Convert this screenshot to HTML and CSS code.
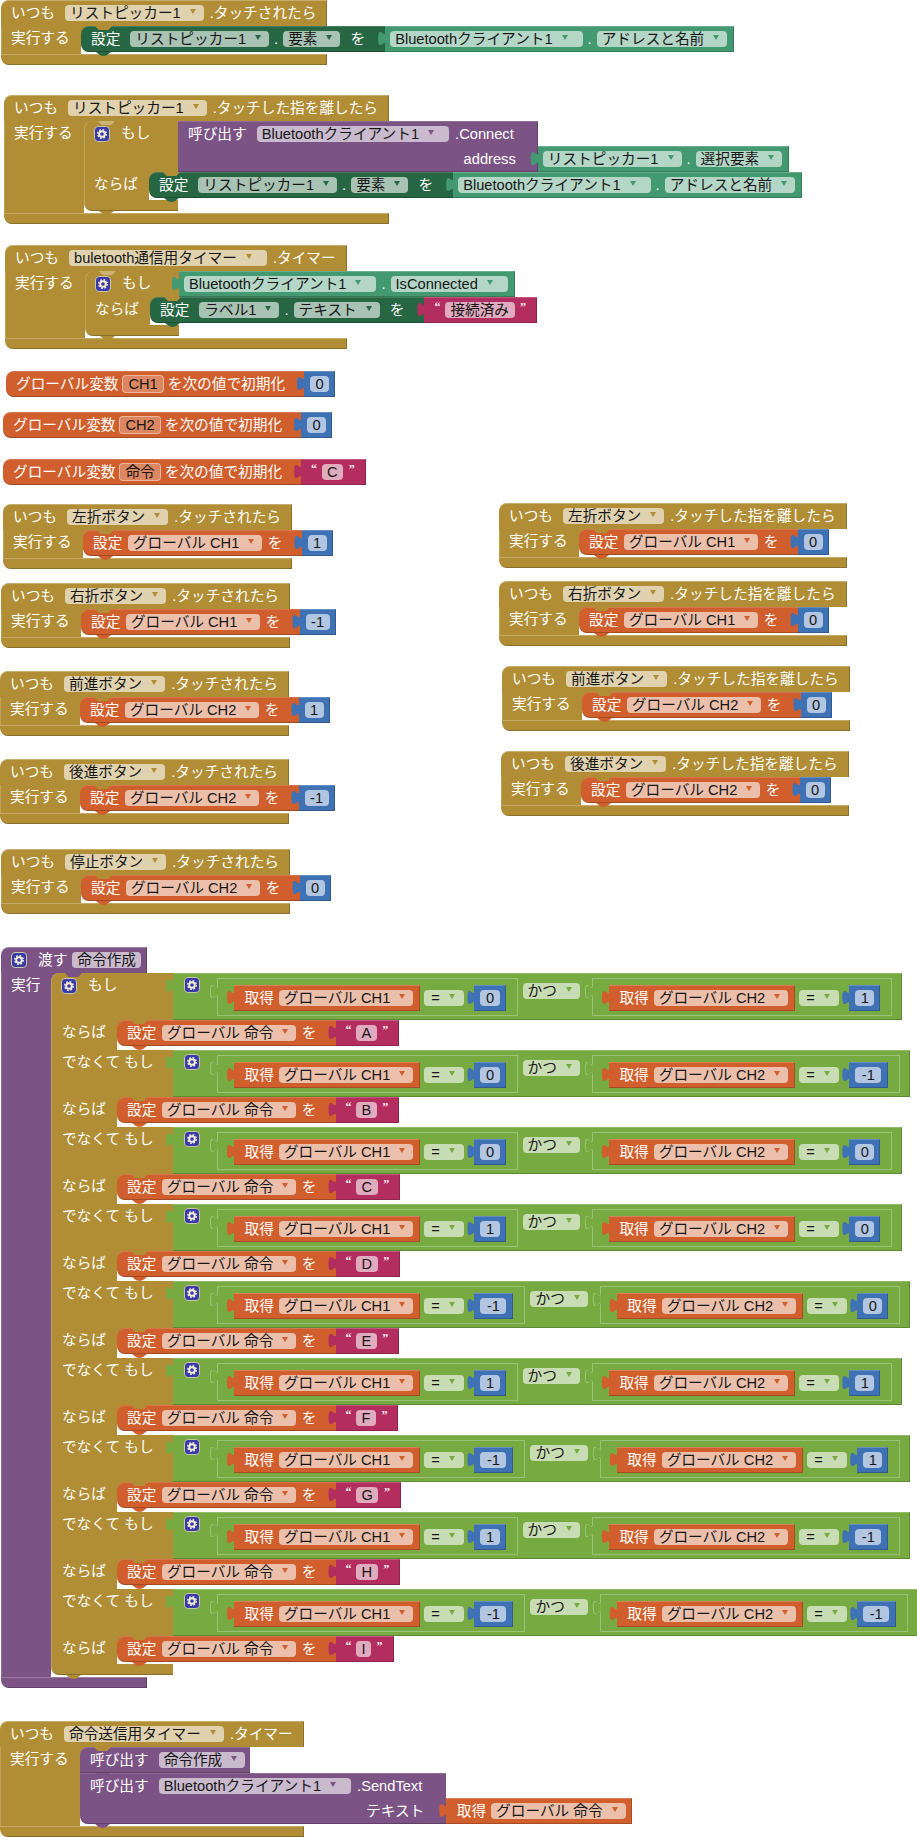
FILE: index.html
```html
<!DOCTYPE html>
<html lang="ja">
<head>
    <meta charset="UTF-8">
    <title>ブロック</title>
    <link rel="stylesheet" href="styles.css">
</head>
<body>
<svg class="defs" width="0" height="0">
    <symbol id="gear" viewBox="0 0 16 16">
        <circle cx="8" cy="8" r="3.2" fill="none" stroke="#f4f0d8" stroke-width="2.2"/>
        <circle cx="8" cy="8" r="4.9" fill="none" stroke="#f4f0d8" stroke-width="1.6" stroke-dasharray="2.1 1.75"/>
    </symbol>
</svg>

<div class="canvas">

    <div class="ev gold at-1">
        <div class="head"><span>いつも</span><span class="dd">リストピッカー1<i class="arw"></i></span><span>.タッチされたら</span></div>
        <div class="body">
            <div class="side">実行する</div>
            <div class="main">
                <div class="row">
                    <div class="stmt setter dkgreen">設定<span class="dd">リストピッカー1<i class="arw"></i></span><span class="dot">.</span><span class="dd">要素<i class="arw"></i></span>を</div>
                    <div class="val getter green"><span class="dd wide">Bluetoothクライアント1<i class="arw"></i></span><span class="dot">.</span><span class="dd">アドレスと名前<i class="arw"></i></span></div>
                </div>
            </div>
        </div>
        <div class="foot"></div>
    </div>

    <div class="ev gold at-2">
        <div class="head"><span>いつも</span><span class="dd">リストピッカー1<i class="arw"></i></span><span>.タッチした指を離したら</span></div>
        <div class="body">
            <div class="side">実行する</div>
            <div class="main">
                <div class="stmt if if-ev gold">
                    <div class="cond">
                        <div class="cell"><span class="gear"><svg><use href="#gear"/></svg></span>もし</div>
                        <div class="call purple">
                            <div class="call-body">
                                <div class="call-line">呼び出す<span class="dd wide">Bluetoothクライアント1<i class="arw"></i></span><span class="meth">.Connect</span></div>
                                <div class="call-line call-arg">address</div>
                            </div>
                            <div class="val getter green"><span class="dd">リストピッカー1<i class="arw"></i></span><span class="dot">.</span><span class="dd">選択要素<i class="arw"></i></span></div>
                        </div>
                    </div>
                    <div class="then">
                        <div class="cell then-cell">ならば</div>
                        <div class="row">
                            <div class="stmt setter dkgreen">設定<span class="dd">リストピッカー1<i class="arw"></i></span><span class="dot">.</span><span class="dd">要素<i class="arw"></i></span>を</div>
                            <div class="val getter green"><span class="dd wide">Bluetoothクライアント1<i class="arw"></i></span><span class="dot">.</span><span class="dd">アドレスと名前<i class="arw"></i></span></div>
                        </div>
                    </div>
                    <div class="if-foot"></div>
                </div>
            </div>
        </div>
        <div class="foot"></div>
    </div>

    <div class="ev gold at-3">
        <div class="head"><span>いつも</span><span class="dd wide">buletooth通信用タイマー<i class="arw"></i></span><span>.タイマー</span></div>
        <div class="body">
            <div class="side">実行する</div>
            <div class="main">
                <div class="stmt if if-ev gold">
                    <div class="cond">
                        <div class="cell"><span class="gear"><svg><use href="#gear"/></svg></span>もし</div>
                        <div class="val getter green"><span class="dd wide">Bluetoothクライアント1<i class="arw"></i></span><span class="dot">.</span><span class="dd wide">IsConnected<i class="arw"></i></span></div>
                    </div>
                    <div class="then">
                        <div class="cell then-cell">ならば</div>
                        <div class="row">
                            <div class="stmt setter dkgreen">設定<span class="dd">ラベル1<i class="arw"></i></span><span class="dot">.</span><span class="dd">テキスト<i class="arw"></i></span>を</div>
                            <div class="val str pink"><span class="q">“</span><span class="fld">接続済み</span><span class="q">”</span></div>
                        </div>
                    </div>
                    <div class="if-foot"></div>
                </div>
            </div>
        </div>
        <div class="foot"></div>
    </div>

    <div class="glob at-g1"><div class="gvar orange">グローバル変数<span class="vname">CH1</span>を次の値で初期化</div><div class="val num blue"><span class="fld">0</span></div></div>
    <div class="glob at-g2"><div class="gvar orange">グローバル変数<span class="vname">CH2</span>を次の値で初期化</div><div class="val num blue"><span class="fld">0</span></div></div>
    <div class="glob at-g3"><div class="gvar orange">グローバル変数<span class="vname">命令</span>を次の値で初期化</div><div class="val str pink"><span class="q">“</span><span class="fld">C</span><span class="q">”</span></div></div>

    <div class="ev gold at-l1">
        <div class="head"><span>いつも</span><span class="dd">左折ボタン<i class="arw"></i></span><span>.タッチされたら</span></div>
        <div class="body"><div class="side">実行する</div><div class="main"><div class="row"><div class="stmt orange">設定<span class="dd">グローバル CH1<i class="arw"></i></span>を</div><div class="val num blue"><span class="fld">1</span></div></div></div></div>
        <div class="foot"></div>
    </div>
    <div class="ev gold at-l2">
        <div class="head"><span>いつも</span><span class="dd">右折ボタン<i class="arw"></i></span><span>.タッチされたら</span></div>
        <div class="body"><div class="side">実行する</div><div class="main"><div class="row"><div class="stmt orange">設定<span class="dd">グローバル CH1<i class="arw"></i></span>を</div><div class="val num blue"><span class="fld">-1</span></div></div></div></div>
        <div class="foot"></div>
    </div>
    <div class="ev gold at-l3">
        <div class="head"><span>いつも</span><span class="dd">前進ボタン<i class="arw"></i></span><span>.タッチされたら</span></div>
        <div class="body"><div class="side">実行する</div><div class="main"><div class="row"><div class="stmt orange">設定<span class="dd">グローバル CH2<i class="arw"></i></span>を</div><div class="val num blue"><span class="fld">1</span></div></div></div></div>
        <div class="foot"></div>
    </div>
    <div class="ev gold at-l4">
        <div class="head"><span>いつも</span><span class="dd">後進ボタン<i class="arw"></i></span><span>.タッチされたら</span></div>
        <div class="body"><div class="side">実行する</div><div class="main"><div class="row"><div class="stmt orange">設定<span class="dd">グローバル CH2<i class="arw"></i></span>を</div><div class="val num blue"><span class="fld">-1</span></div></div></div></div>
        <div class="foot"></div>
    </div>
    <div class="ev gold at-l5">
        <div class="head"><span>いつも</span><span class="dd">停止ボタン<i class="arw"></i></span><span>.タッチされたら</span></div>
        <div class="body"><div class="side">実行する</div><div class="main"><div class="row"><div class="stmt orange">設定<span class="dd">グローバル CH2<i class="arw"></i></span>を</div><div class="val num blue"><span class="fld">0</span></div></div></div></div>
        <div class="foot"></div>
    </div>

    <div class="ev gold at-r1">
        <div class="head"><span>いつも</span><span class="dd">左折ボタン<i class="arw"></i></span><span>.タッチした指を離したら</span></div>
        <div class="body"><div class="side">実行する</div><div class="main"><div class="row"><div class="stmt orange">設定<span class="dd">グローバル CH1<i class="arw"></i></span>を</div><div class="val num blue"><span class="fld">0</span></div></div></div></div>
        <div class="foot"></div>
    </div>
    <div class="ev gold at-r2">
        <div class="head"><span>いつも</span><span class="dd">右折ボタン<i class="arw"></i></span><span>.タッチした指を離したら</span></div>
        <div class="body"><div class="side">実行する</div><div class="main"><div class="row"><div class="stmt orange">設定<span class="dd">グローバル CH1<i class="arw"></i></span>を</div><div class="val num blue"><span class="fld">0</span></div></div></div></div>
        <div class="foot"></div>
    </div>
    <div class="ev gold at-r3">
        <div class="head"><span>いつも</span><span class="dd">前進ボタン<i class="arw"></i></span><span>.タッチした指を離したら</span></div>
        <div class="body"><div class="side">実行する</div><div class="main"><div class="row"><div class="stmt orange">設定<span class="dd">グローバル CH2<i class="arw"></i></span>を</div><div class="val num blue"><span class="fld">0</span></div></div></div></div>
        <div class="foot"></div>
    </div>
    <div class="ev gold at-r4">
        <div class="head"><span>いつも</span><span class="dd">後進ボタン<i class="arw"></i></span><span>.タッチした指を離したら</span></div>
        <div class="body"><div class="side">実行する</div><div class="main"><div class="row"><div class="stmt orange">設定<span class="dd">グローバル CH2<i class="arw"></i></span>を</div><div class="val num blue"><span class="fld">0</span></div></div></div></div>
        <div class="foot"></div>
    </div>

    <div class="ev proc purple at-proc">
        <div class="head"><span class="gear"><svg><use href="#gear"/></svg></span><span>渡す</span><span class="fld">命令作成</span></div>
        <div class="body">
            <div class="side">実行</div>
            <div class="main">
                <div class="stmt if if-proc gold">

                    <div class="cond">
                        <div class="cell"><span class="gear"><svg><use href="#gear"/></svg></span>もし</div>
                        <div class="val and lime"><span class="gear"><svg><use href="#gear"/></svg></span>
                            <div class="eq"><div class="val get orange">取得<span class="dd">グローバル CH1<i class="arw"></i></span></div><span class="dd eqsym">=<i class="arw"></i></span><div class="val num blue"><span class="fld">0</span></div></div>
                            <span class="dd kats">かつ<i class="arw"></i></span>
                            <div class="eq"><div class="val get orange">取得<span class="dd">グローバル CH2<i class="arw"></i></span></div><span class="dd eqsym">=<i class="arw"></i></span><div class="val num blue"><span class="fld">1</span></div></div>
                        </div>
                    </div>
                    <div class="then">
                        <div class="cell then-cell">ならば</div>
                        <div class="row"><div class="stmt orange">設定<span class="dd">グローバル 命令<i class="arw"></i></span>を</div><div class="val str pink"><span class="q">“</span><span class="fld">A</span><span class="q">”</span></div></div>
                    </div>

                    <div class="cond">
                        <div class="cell">でなくて もし</div>
                        <div class="val and lime"><span class="gear"><svg><use href="#gear"/></svg></span>
                            <div class="eq"><div class="val get orange">取得<span class="dd">グローバル CH1<i class="arw"></i></span></div><span class="dd eqsym">=<i class="arw"></i></span><div class="val num blue"><span class="fld">0</span></div></div>
                            <span class="dd kats">かつ<i class="arw"></i></span>
                            <div class="eq"><div class="val get orange">取得<span class="dd">グローバル CH2<i class="arw"></i></span></div><span class="dd eqsym">=<i class="arw"></i></span><div class="val num blue"><span class="fld neg">-1</span></div></div>
                        </div>
                    </div>
                    <div class="then">
                        <div class="cell then-cell">ならば</div>
                        <div class="row"><div class="stmt orange">設定<span class="dd">グローバル 命令<i class="arw"></i></span>を</div><div class="val str pink"><span class="q">“</span><span class="fld">B</span><span class="q">”</span></div></div>
                    </div>

                    <div class="cond">
                        <div class="cell">でなくて もし</div>
                        <div class="val and lime"><span class="gear"><svg><use href="#gear"/></svg></span>
                            <div class="eq"><div class="val get orange">取得<span class="dd">グローバル CH1<i class="arw"></i></span></div><span class="dd eqsym">=<i class="arw"></i></span><div class="val num blue"><span class="fld">0</span></div></div>
                            <span class="dd kats">かつ<i class="arw"></i></span>
                            <div class="eq"><div class="val get orange">取得<span class="dd">グローバル CH2<i class="arw"></i></span></div><span class="dd eqsym">=<i class="arw"></i></span><div class="val num blue"><span class="fld">0</span></div></div>
                        </div>
                    </div>
                    <div class="then">
                        <div class="cell then-cell">ならば</div>
                        <div class="row"><div class="stmt orange">設定<span class="dd">グローバル 命令<i class="arw"></i></span>を</div><div class="val str pink"><span class="q">“</span><span class="fld">C</span><span class="q">”</span></div></div>
                    </div>

                    <div class="cond">
                        <div class="cell">でなくて もし</div>
                        <div class="val and lime"><span class="gear"><svg><use href="#gear"/></svg></span>
                            <div class="eq"><div class="val get orange">取得<span class="dd">グローバル CH1<i class="arw"></i></span></div><span class="dd eqsym">=<i class="arw"></i></span><div class="val num blue"><span class="fld">1</span></div></div>
                            <span class="dd kats">かつ<i class="arw"></i></span>
                            <div class="eq"><div class="val get orange">取得<span class="dd">グローバル CH2<i class="arw"></i></span></div><span class="dd eqsym">=<i class="arw"></i></span><div class="val num blue"><span class="fld">0</span></div></div>
                        </div>
                    </div>
                    <div class="then">
                        <div class="cell then-cell">ならば</div>
                        <div class="row"><div class="stmt orange">設定<span class="dd">グローバル 命令<i class="arw"></i></span>を</div><div class="val str pink"><span class="q">“</span><span class="fld">D</span><span class="q">”</span></div></div>
                    </div>

                    <div class="cond">
                        <div class="cell">でなくて もし</div>
                        <div class="val and lime"><span class="gear"><svg><use href="#gear"/></svg></span>
                            <div class="eq"><div class="val get orange">取得<span class="dd">グローバル CH1<i class="arw"></i></span></div><span class="dd eqsym">=<i class="arw"></i></span><div class="val num blue"><span class="fld neg">-1</span></div></div>
                            <span class="dd kats">かつ<i class="arw"></i></span>
                            <div class="eq"><div class="val get orange">取得<span class="dd">グローバル CH2<i class="arw"></i></span></div><span class="dd eqsym">=<i class="arw"></i></span><div class="val num blue"><span class="fld">0</span></div></div>
                        </div>
                    </div>
                    <div class="then">
                        <div class="cell then-cell">ならば</div>
                        <div class="row"><div class="stmt orange">設定<span class="dd">グローバル 命令<i class="arw"></i></span>を</div><div class="val str pink"><span class="q">“</span><span class="fld">E</span><span class="q">”</span></div></div>
                    </div>

                    <div class="cond">
                        <div class="cell">でなくて もし</div>
                        <div class="val and lime"><span class="gear"><svg><use href="#gear"/></svg></span>
                            <div class="eq"><div class="val get orange">取得<span class="dd">グローバル CH1<i class="arw"></i></span></div><span class="dd eqsym">=<i class="arw"></i></span><div class="val num blue"><span class="fld">1</span></div></div>
                            <span class="dd kats">かつ<i class="arw"></i></span>
                            <div class="eq"><div class="val get orange">取得<span class="dd">グローバル CH2<i class="arw"></i></span></div><span class="dd eqsym">=<i class="arw"></i></span><div class="val num blue"><span class="fld">1</span></div></div>
                        </div>
                    </div>
                    <div class="then">
                        <div class="cell then-cell">ならば</div>
                        <div class="row"><div class="stmt orange">設定<span class="dd">グローバル 命令<i class="arw"></i></span>を</div><div class="val str pink"><span class="q">“</span><span class="fld">F</span><span class="q">”</span></div></div>
                    </div>

                    <div class="cond">
                        <div class="cell">でなくて もし</div>
                        <div class="val and lime"><span class="gear"><svg><use href="#gear"/></svg></span>
                            <div class="eq"><div class="val get orange">取得<span class="dd">グローバル CH1<i class="arw"></i></span></div><span class="dd eqsym">=<i class="arw"></i></span><div class="val num blue"><span class="fld neg">-1</span></div></div>
                            <span class="dd kats">かつ<i class="arw"></i></span>
                            <div class="eq"><div class="val get orange">取得<span class="dd">グローバル CH2<i class="arw"></i></span></div><span class="dd eqsym">=<i class="arw"></i></span><div class="val num blue"><span class="fld">1</span></div></div>
                        </div>
                    </div>
                    <div class="then">
                        <div class="cell then-cell">ならば</div>
                        <div class="row"><div class="stmt orange">設定<span class="dd">グローバル 命令<i class="arw"></i></span>を</div><div class="val str pink"><span class="q">“</span><span class="fld">G</span><span class="q">”</span></div></div>
                    </div>

                    <div class="cond">
                        <div class="cell">でなくて もし</div>
                        <div class="val and lime"><span class="gear"><svg><use href="#gear"/></svg></span>
                            <div class="eq"><div class="val get orange">取得<span class="dd">グローバル CH1<i class="arw"></i></span></div><span class="dd eqsym">=<i class="arw"></i></span><div class="val num blue"><span class="fld">1</span></div></div>
                            <span class="dd kats">かつ<i class="arw"></i></span>
                            <div class="eq"><div class="val get orange">取得<span class="dd">グローバル CH2<i class="arw"></i></span></div><span class="dd eqsym">=<i class="arw"></i></span><div class="val num blue"><span class="fld neg">-1</span></div></div>
                        </div>
                    </div>
                    <div class="then">
                        <div class="cell then-cell">ならば</div>
                        <div class="row"><div class="stmt orange">設定<span class="dd">グローバル 命令<i class="arw"></i></span>を</div><div class="val str pink"><span class="q">“</span><span class="fld">H</span><span class="q">”</span></div></div>
                    </div>

                    <div class="cond">
                        <div class="cell">でなくて もし</div>
                        <div class="val and lime"><span class="gear"><svg><use href="#gear"/></svg></span>
                            <div class="eq"><div class="val get orange">取得<span class="dd">グローバル CH1<i class="arw"></i></span></div><span class="dd eqsym">=<i class="arw"></i></span><div class="val num blue"><span class="fld neg">-1</span></div></div>
                            <span class="dd kats">かつ<i class="arw"></i></span>
                            <div class="eq"><div class="val get orange">取得<span class="dd">グローバル CH2<i class="arw"></i></span></div><span class="dd eqsym">=<i class="arw"></i></span><div class="val num blue"><span class="fld neg">-1</span></div></div>
                        </div>
                    </div>
                    <div class="then">
                        <div class="cell then-cell">ならば</div>
                        <div class="row"><div class="stmt orange">設定<span class="dd">グローバル 命令<i class="arw"></i></span>を</div><div class="val str pink"><span class="q">“</span><span class="fld">I</span><span class="q">”</span></div></div>
                    </div>

                    <div class="if-foot"></div>
                </div>
            </div>
        </div>
        <div class="foot"></div>
    </div>

    <div class="ev gold at-last">
        <div class="head"><span>いつも</span><span class="dd">命令送信用タイマー<i class="arw"></i></span><span>.タイマー</span></div>
        <div class="body">
            <div class="side">実行する</div>
            <div class="main">
                <div class="stmt first purple">呼び出す<span class="dd">命令作成<i class="arw"></i></span></div>
                <div class="call purple">
                    <div class="stmt multi">
                        <div class="call-line">呼び出す<span class="dd wide">Bluetoothクライアント1<i class="arw"></i></span><span class="meth">.SendText</span></div>
                        <div class="call-line call-arg">テキスト</div>
                    </div>
                    <div class="val get orange">取得<span class="dd">グローバル 命令<i class="arw"></i></span></div>
                </div>
            </div>
        </div>
        <div class="foot"></div>
    </div>

</div>
</body>
</html>
```

FILE: styles.css
```css
* {
    box-sizing: border-box;
}
body {
    margin: 0;
    background: #fff;
    color: #fff;
    font: 14.67px/16px "Liberation Sans", "Noto Sans CJK JP", sans-serif;
    white-space: nowrap;
}
.defs {
    position: absolute;
}
.canvas {
    position: relative;
    width: 917px;
    height: 1837px;
    overflow: hidden;
}

/* block colours */
.gold { --c: #b18e35; }
.dkgreen { --c: #266643; }
.green { --c: #439970; }
.purple { --c: #7c5385; }
.orange { --c: #d05f2d; }
.blue { --c: #3f71b5; }
.pink { --c: #b32d5e; }
.lime { --c: #77ab41; }

/* where each stack sits on the workspace */
.ev, .glob { position: absolute; }
.at-1 { left: 1px; top: 0; }
.at-2 { left: 4px; top: 95px; }
.at-3 { left: 5px; top: 245px; }
.at-g1 { left: 6px; top: 371px; }
.at-g2 { left: 3px; top: 412px; }
.at-g3 { left: 3px; top: 459px; }
.at-l1 { left: 3px; top: 504px; }
.at-l2 { left: 1px; top: 583px; }
.at-l3 { left: 0; top: 671px; }
.at-l4 { left: 0; top: 759px; }
.at-l5 { left: 1px; top: 849px; }
.at-r1 { left: 499px; top: 503px; }
.at-r2 { left: 499px; top: 581px; }
.at-r3 { left: 502px; top: 666px; }
.at-r4 { left: 501px; top: 751px; }
.at-proc { left: 1px; top: 947px; }
.at-last { left: 0; top: 1721px; }

/* event and procedure frame */
.head {
    display: flex;
    align-items: center;
    height: 26px;
    padding: 0 11px 0 10px;
    background: var(--c);
    border-radius: 8px 0 0 0;
    box-shadow: inset 0 1px rgba(255,255,255,.28), inset -1px 0 rgba(0,0,0,.2);
}
.head .dd {
    margin: 0 6px 0 10px;
}
.body {
    display: flex;
    width: 0;
}
.side {
    flex: none;
    width: 80px;
    padding-left: 10px;
    line-height: 24px;
    background: var(--c);
    box-shadow: inset 1px 0 rgba(255,255,255,.18);
}
.main {
    flex: none;
    padding-bottom: 2px;
    background: linear-gradient(var(--c), var(--c)) 0 0 / 8px 14px no-repeat;
}
.foot {
    height: 11px;
    background: var(--c);
    border-radius: 0 0 0 8px;
    box-shadow: inset 0 1px rgba(255,255,255,.25), inset -1px -1px rgba(0,0,0,.22);
}
.proc .side {
    width: 50px;
}
.proc .head {
    padding: 0 6px 0 10px;
}
.proc .head .gear {
    margin: 0 11px 0 0;
}
.proc .head .fld {
    margin-left: 5px;
    padding: 0 5px;
}

/* fields */
.dd, .fld {
    flex: none;
    height: 16px;
    line-height: 16px;
    color: #161616;
    background: rgba(255,255,255,.6);
    border-radius: 4px;
}
.dd {
    display: inline-flex;
    padding: 0 8px 0 5px;
}
.dd.wide {
    padding-right: 15px;
}
.fld {
    padding: 0 5.5px;
}
.fld.neg {
    margin-right: 1px;
    padding: 0 6.5px;
}
.arw {
    flex: none;
    align-self: flex-start;
    width: 0;
    height: 0;
    margin: 4px 0 0 9px;
    border-top: 5px solid var(--c);
    border-left: 3px solid transparent;
    border-right: 3px solid transparent;
}
.dot {
    margin: 0 -5px;
}
.vname {
    height: 18px;
    padding: 0 5px;
    line-height: 16px;
    color: #161616;
    background: rgba(255,255,255,.25);
    border: 1px solid rgba(255,255,255,.4);
    border-radius: 4px;
}
.q {
    width: 5px;
    align-self: flex-start;
    margin-top: 4px;
    font: bold 12px/12px "Liberation Serif", serif;
    color: #fbeef3;
}
.meth {
    margin-left: -4px;
}

/* statement blocks */
.row {
    display: flex;
    flex: none;
    background: linear-gradient(var(--c), var(--c)) 0 0 / 8px 14px no-repeat;
}
.stmt {
    position: relative;
    flex: none;
    display: flex;
    align-items: center;
    gap: 5.5px;
    height: 26px;
    padding: 0 19px 0 10px;
    background: var(--c);
    border-radius: 8px 0 0 8px;
    box-shadow: inset 0 1px rgba(255,255,255,.15), inset 0 -1px rgba(0,0,0,.22);
}
.stmt::before {
    content: "";
    position: absolute;
    left: 14px;
    top: 0;
    width: 17px;
    height: 4px;
    background: #b18e35;
    clip-path: polygon(0 0, 100% 0, 78% 100%, 22% 100%);
}
.stmt::after {
    content: "";
    position: absolute;
    z-index: 2;
    left: 15px;
    top: 100%;
    width: 15px;
    height: 4px;
    background: var(--c);
    clip-path: polygon(0 0, 100% 0, 72% 80%, 50% 100%, 28% 80%);
}
.setter {
    gap: 10px;
    padding-right: 20px;
}
.first {
    width: fit-content;
    gap: 10px;
    padding-right: 5px;
    border-radius: 8px 0 0 0;
}
.multi {
    display: block;
    height: auto;
    padding: 0;
    border-radius: 0 0 0 8px;
}
.multi::before {
    display: none;
}

/* value blocks, the puzzle tab hangs off the left side */
.val {
    position: relative;
    flex: none;
    display: flex;
    align-items: center;
    height: 26px;
    background: var(--c);
    box-shadow: inset 0 1px rgba(255,255,255,.2), inset -1px -1px rgba(0,0,0,.2);
}
.val::before {
    content: "";
    position: absolute;
    left: -8px;
    top: 5px;
    width: 9px;
    height: 16px;
    background: var(--c);
    clip-path: path("M9,0 C9,10 1,-8 1,7.5 S9,5 9,15 Z");
}
.getter {
    gap: 10px;
    padding: 0 7px 0 5px;
}
.num {
    padding: 0 6px;
}
.str {
    gap: 5.5px;
    padding: 0 12px 0 10px;
}
.get {
    gap: 5px;
    padding: 0 6.5px 0 10.5px;
}

/* global variable */
.glob {
    display: flex;
}
.gvar {
    display: flex;
    align-items: center;
    gap: 4px;
    height: 26px;
    padding: 0 19px 0 10px;
    background: var(--c);
    border-radius: 8px 0 0 8px;
    box-shadow: inset 0 1px rgba(255,255,255,.15), inset 0 -1px rgba(0,0,0,.22);
}

/* if / else if */
.if {
    display: block;
    height: auto;
    padding: 0;
    width: 94px;
    background: none;
    box-shadow: none;
}
.if-proc {
    width: 122px;
}
.if-ev::before {
    z-index: 1;
    background: #cdb475;
}
.if-proc::before {
    z-index: 1;
    background: #7c5385;
}
.cond {
    display: flex;
}
.then + .cond {
    margin-top: 2px;
}
.cell {
    flex: none;
    display: flex;
    align-items: flex-start;
    gap: 11px;
    width: 94px;
    padding-left: 10px;
    line-height: 24px;
    background: var(--c);
    box-shadow: inset 1px 0 rgba(255,255,255,.2);
}
.if-proc .cell {
    width: 122px;
    padding-left: 11px;
}
.if-proc .cell .gear {
    margin-left: -1px;
}
.cond:first-child .cell {
    border-radius: 8px 0 0 0;
}
.then {
    display: flex;
    height: 28px;
}
.cell.then-cell {
    width: 65px;
    height: 30px;
}
.if-proc .cell.then-cell {
    width: 66px;
}
.if-foot {
    position: relative;
    height: 11px;
    background: var(--c);
    border-radius: 0 0 0 8px;
    box-shadow: inset 1px 0 rgba(255,255,255,.2), inset 0 -1px rgba(0,0,0,.22);
}

/* mutator icon */
.gear {
    flex: none;
    display: block;
    width: 16px;
    height: 16px;
    margin-top: 5px;
    background: #3a3aa8;
    border: 1px solid #c9c8a6;
    border-radius: 4px;
}
.gear svg {
    display: block;
    width: 14px;
    height: 14px;
}

/* procedure call with argument */
.call {
    display: flex;
    align-items: flex-end;
}
.call-body {
    background: var(--c);
    box-shadow: inset 0 1px rgba(255,255,255,.15), inset -1px -1px rgba(0,0,0,.2);
}
.call-line {
    display: flex;
    align-items: center;
    gap: 10px;
    height: 25px;
    padding: 0 24px 0 10px;
}
.call-arg {
    justify-content: flex-end;
    height: 26px;
    padding-right: 22px;
}

/* logic blocks */
.and {
    height: 47px;
    align-items: flex-start;
    padding: 5px 10px 0 11px;
}
.and > .gear {
    margin: -1px 17px 0 0;
}
.eq {
    position: relative;
    flex: none;
    display: flex;
    align-items: flex-start;
    height: 38px;
    padding: 6px 11px 0 16px;
    background: var(--c);
    border: 1px solid #9cc27a;
}
.eq::before, .eq::after {
    content: "";
    position: absolute;
    left: -9px;
    top: 5px;
    width: 9px;
    height: 16px;
    background: #9cc27a;
    clip-path: path("M9,0 C9,10 1,-8 1,7.5 S9,5 9,15 Z");
}
.eq::after {
    left: -8px;
    top: 6px;
    width: 8px;
    height: 14px;
    background: var(--c);
    clip-path: path("M8,0 C8,9 1,-7 1,6.5 S8,4.5 8,13 Z");
}
.eqsym {
    margin: 5px 10px 0 4px;
    padding: 0 9.5px 0 7.5px;
}
.kats {
    margin: 5px 12px 0 5px;
}
```
